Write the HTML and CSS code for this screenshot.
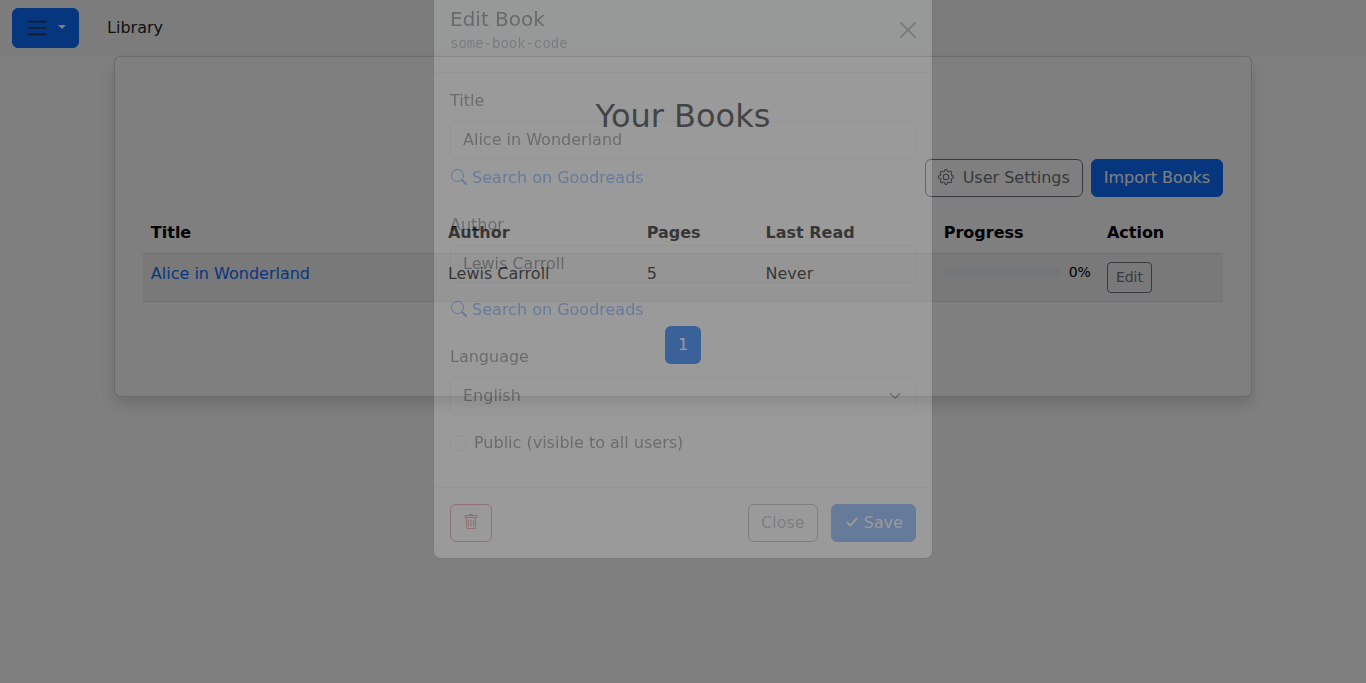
FILE: index.html
```html
<!DOCTYPE html>
<html lang="en">
<head>
<meta charset="utf-8">
<meta name="viewport" content="width=device-width, initial-scale=1">
<title>Library</title>
<link rel="stylesheet" href="styles.css">
</head>
<body>
<nav class="navbar">
  <button class="btn btn-primary btn-menu" type="button" aria-label="Menu"><svg class="toggler-icon" viewBox="0 0 30 30"><path d="M4 7h22M4 15h22M4 23h22"/></svg> <span class="caret"></span></button>
  <span class="navbar-title">Library</span>
</nav>

<main class="card">
  <h2 class="card-title">Your Books</h2>
  <div class="toolbar">
    <button class="btn btn-outline" type="button"><svg class="icon icon-gap" viewBox="0 0 16 16"><path d="M8 4.754a3.246 3.246 0 1 0 0 6.492 3.246 3.246 0 0 0 0-6.492zM5.754 8a2.246 2.246 0 1 1 4.492 0 2.246 2.246 0 0 1-4.492 0z"/><path d="M9.796 1.343c-.527-1.79-3.065-1.79-3.592 0l-.094.319a.873.873 0 0 1-1.255.52l-.292-.16c-1.64-.892-3.433.902-2.54 2.541l.159.292a.873.873 0 0 1-.52 1.255l-.319.094c-1.79.527-1.79 3.065 0 3.592l.319.094a.873.873 0 0 1 .52 1.255l-.16.292c-.892 1.64.901 3.434 2.541 2.54l.292-.159a.873.873 0 0 1 1.255.52l.094.319c.527 1.79 3.065 1.79 3.592 0l.094-.319a.873.873 0 0 1 1.255-.52l.292.16c1.64.893 3.434-.902 2.54-2.541l-.159-.292a.873.873 0 0 1 .52-1.255l.319-.094c1.79-.527 1.79-3.065 0-3.592l-.319-.094a.873.873 0 0 1-.52-1.255l.16-.292c.893-1.64-.902-3.433-2.541-2.54l-.292.159a.873.873 0 0 1-1.255-.52l-.094-.319zm-2.633.283c.246-.835 1.428-.835 1.674 0l.094.319a1.873 1.873 0 0 0 2.693 1.115l.291-.16c.764-.415 1.6.42 1.184 1.185l-.159.292a1.873 1.873 0 0 0 1.116 2.692l.318.094c.835.246.835 1.428 0 1.674l-.319.094a1.873 1.873 0 0 0-1.115 2.693l.16.291c.415.764-.42 1.6-1.185 1.184l-.291-.159a1.873 1.873 0 0 0-2.693 1.116l-.094.318c-.246.835-1.428.835-1.674 0l-.094-.319a1.873 1.873 0 0 0-2.692-1.115l-.292.16c-.764.415-1.6-.42-1.184-1.185l.159-.291A1.873 1.873 0 0 0 1.945 8.93l-.319-.094c-.835-.246-.835-1.428 0-1.674l.319-.094A1.873 1.873 0 0 0 3.06 4.377l-.16-.292c-.415-.764.42-1.6 1.185-1.184l.292.159a1.873 1.873 0 0 0 2.692-1.115l.094-.319z"/></svg> User Settings</button>
    <button class="btn btn-primary" type="button">Import Books</button>
  </div>
  <table class="table">
    <colgroup><col class="col-title"><col class="col-author"><col class="col-pages"><col class="col-read"><col class="col-progress"><col class="col-action"></colgroup>
    <thead>
      <tr><th scope="col">Title</th><th scope="col">Author</th><th scope="col">Pages</th><th scope="col">Last Read</th><th scope="col">Progress</th><th scope="col">Action</th></tr>
    </thead>
    <tbody>
      <tr>
        <td><a class="link" href="#">Alice in Wonderland</a></td>
        <td>Lewis Carroll</td>
        <td>5</td>
        <td>Never</td>
        <td><div class="progress-cell"><div class="progress" role="progressbar" aria-label="Reading progress" aria-valuenow="0" aria-valuemin="0" aria-valuemax="100"></div><span class="progress-text">0%</span></div></td>
        <td><button class="btn btn-outline btn-sm" type="button">Edit</button></td>
      </tr>
    </tbody>
  </table>
  <div class="pagination"><a class="page-link" href="#">1</a></div>
</main>

<div class="backdrop"></div>

<div class="modal" role="dialog" aria-labelledby="modal-title">
  <form class="modal-content">
    <header class="modal-header">
      <div>
        <h5 class="modal-title" id="modal-title">Edit Book</h5>
        <div class="book-code">some-book-code</div>
      </div>
      <button class="btn-close" type="button" aria-label="Dismiss"><svg class="close-icon" viewBox="0 0 16 16"><path d="M.293.293a1 1 0 0 1 1.414 0L8 6.586 14.293.293a1 1 0 1 1 1.414 1.414L9.414 8l6.293 6.293a1 1 0 0 1-1.414 1.414L8 9.414l-6.293 6.293a1 1 0 0 1-1.414-1.414L6.586 8 .293 1.707a1 1 0 0 1 0-1.414z"/></svg></button>
    </header>
    <div class="modal-body">
      <div class="field">
        <label class="label" for="title">Title</label>
        <input class="control" id="title" type="text" value="Alice in Wonderland">
        <a class="btn btn-link" href="#"><svg class="icon" viewBox="0 0 16 16"><path d="M11.742 10.344a6.5 6.5 0 1 0-1.397 1.398h-.001c.03.04.062.078.098.115l3.85 3.85a1 1 0 0 0 1.415-1.414l-3.85-3.85a1.007 1.007 0 0 0-.115-.1zM12 6.5a5.5 5.5 0 1 1-11 0 5.5 5.5 0 0 1 11 0z"/></svg> Search on Goodreads</a>
      </div>
      <div class="field">
        <label class="label" for="author">Author</label>
        <input class="control" id="author" type="text" value="Lewis Carroll">
        <a class="btn btn-link btn-spaced" href="#"><svg class="icon" viewBox="0 0 16 16"><path d="M11.742 10.344a6.5 6.5 0 1 0-1.397 1.398h-.001c.03.04.062.078.098.115l3.85 3.85a1 1 0 0 0 1.415-1.414l-3.85-3.85a1.007 1.007 0 0 0-.115-.1zM12 6.5a5.5 5.5 0 1 1-11 0 5.5 5.5 0 0 1 11 0z"/></svg> Search on Goodreads</a>
      </div>
      <div class="field">
        <label class="label" for="language">Language</label>
        <select class="control select" id="language"><option>English</option></select>
      </div>
      <div class="field check">
        <input class="check-input" id="public" type="checkbox">
        <label for="public">Public (visible to all users)</label>
      </div>
    </div>
    <footer class="modal-footer">
      <button class="btn btn-danger" type="button" aria-label="Delete book"><svg class="icon" viewBox="0 0 16 16"><path d="M5.5 5.5A.5.5 0 0 1 6 6v6a.5.5 0 0 1-1 0V6a.5.5 0 0 1 .5-.5Zm2.5 0a.5.5 0 0 1 .5.5v6a.5.5 0 0 1-1 0V6a.5.5 0 0 1 .5-.5Zm3 .5a.5.5 0 0 0-1 0v6a.5.5 0 0 0 1 0V6Z"/><path d="M14.5 3a1 1 0 0 1-1 1H13v9a2 2 0 0 1-2 2H5a2 2 0 0 1-2-2V4h-.5a1 1 0 0 1-1-1V2a1 1 0 0 1 1-1H6a1 1 0 0 1 1-1h2a1 1 0 0 1 1 1h3.5a1 1 0 0 1 1 1v1ZM4.118 4 4 4.059V13a1 1 0 0 0 1 1h6a1 1 0 0 0 1-1V4.059L11.882 4H4.118ZM2.5 3h11V2h-11v1Z"/></svg></button>
      <div class="footer-actions">
        <button class="btn btn-outline" type="button">Close</button>
        <button class="btn btn-primary" type="submit"><svg class="icon icon-check" viewBox="0 0 16 16"><path d="M3.500 8.500 6.800 11.800 13.500 4.500"/></svg> Save</button>
      </div>
    </footer>
  </form>
</div>
</body>
</html>
```
FILE: styles.css
```css
*, *::before, *::after { box-sizing: border-box; }

body {
  min-height: 100vh;
  margin: 0;
  background: #fff;
  color: #212529;
  font: 16px/24px "DejaVu Sans", sans-serif;
}

button, input, select { font: inherit; color: inherit; }
button { cursor: pointer; }
a { text-decoration: none; }

.btn {
  display: inline-block;
  padding: 6px 12px;
  border: 1px solid transparent;
  border-radius: 6px;
  background: transparent;
  text-align: center;
}
.btn-primary { background: #0d6efd; border-color: #0d6efd; color: #fff; }
.btn-outline { border-color: #6c757d; color: #6c757d; }
.btn-danger { border-color: #dc3545; color: #dc3545; }
.btn-link { padding: 6px 0; color: #0d6efd; }
.btn-spaced { margin-top: 8px; }
.btn-sm { padding: 4px 8px; border-radius: 4px; font-size: 14px; line-height: 21px; }
.btn-menu { min-height: 40px; }

.icon { width: 16px; height: 16px; fill: currentColor; vertical-align: -2px; }
.icon-gap { margin-right: 4px; }
.icon-check {
  width: 15px;
  fill: none;
  stroke: currentColor;
  stroke-width: 2;
  stroke-linecap: round;
  stroke-linejoin: round;
}

.navbar {
  display: flex;
  align-items: center;
  gap: 28px;
  padding: 8px 12px;
  background: #f8f9fa;
}
.toggler-icon {
  width: 24px;
  height: 24px;
  vertical-align: middle;
  fill: none;
  stroke: rgba(33, 37, 41, .75);
  stroke-width: 2;
  stroke-linecap: round;
}
.caret {
  display: inline-block;
  margin-left: 4px;
  vertical-align: 4px;
  border: 4px solid transparent;
  border-top-color: #fff;
  border-bottom: 0;
}

.card {
  width: 83.3333%;
  margin: 0 auto;
  padding: 40px 28px 16px;
  border: 1px solid rgba(0, 0, 0, .175);
  border-radius: 6px;
  background: #fff;
  box-shadow: 0 8px 16px rgba(0, 0, 0, .15);
}
.card-title {
  margin: 0 0 24px;
  font-size: 32px;
  font-weight: 400;
  line-height: 38px;
  text-align: center;
}
.toolbar { display: flex; justify-content: flex-end; gap: 8px; margin-bottom: 16px; }

.table {
  width: 100%;
  margin-bottom: 24px;
  border-collapse: separate;
  border-spacing: 0;
  table-layout: fixed;
  color: #000;
}
.table th, .table td {
  padding: 8px;
  border-bottom: 1px solid #dee2e6;
  text-align: left;
  vertical-align: top;
}
.table td { background: #f2f2f2; }
.col-title { width: 27.5%; }
.col-author { width: 18.4%; }
.col-pages { width: 11%; }
.col-read { width: 16.5%; }
.col-progress { width: 15.1%; }
.col-action { width: 11.5%; }
.table .btn { display: block; }
.link { color: #0d6efd; }

.progress-cell { display: flex; align-items: center; gap: 8px; }
.progress { flex: 1; height: 10px; border-radius: 6px; background: #e9ecef; }
.progress-text { font-size: 14px; line-height: 21px; }

.pagination { display: flex; justify-content: center; margin-bottom: 16px; }
.page-link { padding: 7px 13px; border-radius: 6px; background: #0d6efd; color: #fff; }

.backdrop { position: fixed; inset: 0; background: rgba(0, 0, 0, .5); }

.modal { position: fixed; inset: 0; overflow: hidden; opacity: .21; }
.modal-content {
  max-width: 500px;
  margin: -12px auto 0;
  border: 1px solid rgba(0, 0, 0, .175);
  border-radius: 8px;
  background: #fff;
  background-clip: padding-box;
}
.modal-header {
  display: flex;
  align-items: flex-start;
  justify-content: space-between;
  padding: 16px;
  border-bottom: 1px solid #dee2e6;
}
.modal-title { margin: 0; font-size: 20px; font-weight: 400; line-height: 28px; }
.book-code { color: #6c757d; font: 14px/23px "Liberation Mono", monospace; }
.btn-close {
  margin: 9px -8px 0 0;
  padding: 8px;
  border: 0;
  background: transparent;
  opacity: .5;
}
.close-icon { display: block; width: 16px; height: 16px; fill: #000; }

.modal-body { padding: 16px; }
.field { display: flow-root; margin-bottom: 16px; }
.label { display: block; margin-bottom: 8px; }
.field .btn { display: block; width: fit-content; }
.control {
  display: block;
  width: 100%;
  height: 38px;
  padding: 5px 12px 7px;
  border: 1px solid #dee2e6;
  border-radius: 6px;
  background: #fff;
}
.select {
  padding: 6px 12px;
  appearance: none;
  background: #fff url("data:image/svg+xml,%3Csvg xmlns='http://www.w3.org/2000/svg' viewBox='0 0 16 16'%3E%3Cpath fill='none' stroke='%23343a40' stroke-linecap='round' stroke-linejoin='round' stroke-width='2' d='m2 5 6 6 6-6'/%3E%3C/svg%3E") no-repeat right 12px center / 16px 12px;
}
.check { display: flex; align-items: center; gap: 8px; }
.check-input {
  appearance: none;
  width: 16px;
  height: 16px;
  margin: 0;
  border: 1px solid #dee2e6;
  border-radius: 4px;
}
.modal-footer {
  display: flex;
  justify-content: space-between;
  padding: 16px;
  border-top: 1px solid #dee2e6;
}
.footer-actions { display: flex; gap: 13px; }
```
